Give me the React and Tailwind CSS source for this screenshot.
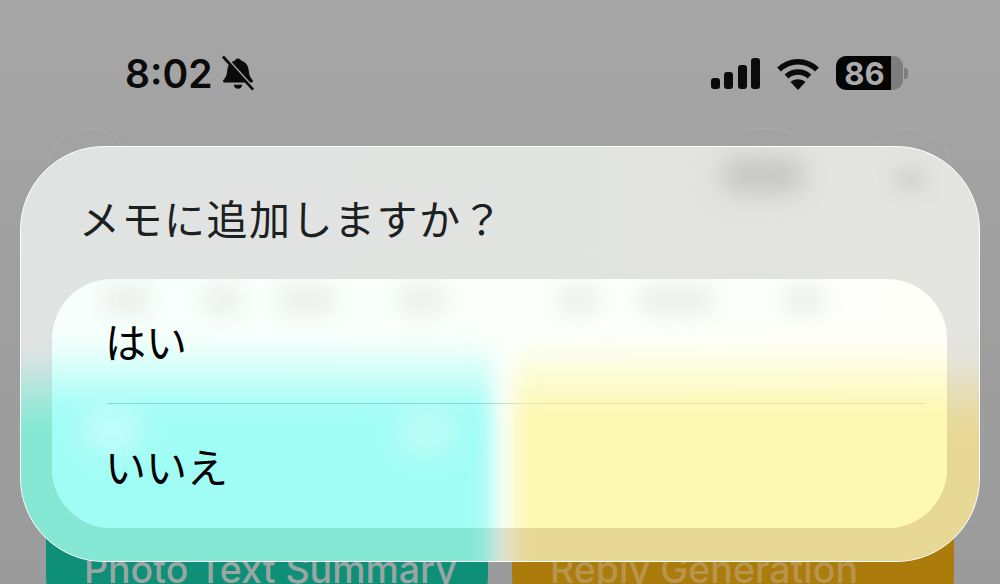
import React from 'react';

const jp = "font-['Noto_Sans_CJK_JP','Noto_Sans',sans-serif]";

// smudges of the blurred row behind the dialog's white panel
const smudges = [
  { id: 1, cls: 'left-[50px] w-[50px]' },
  { id: 2, cls: 'left-[150px] w-[40px]' },
  { id: 3, cls: 'left-[225px] w-[60px]' },
  { id: 4, cls: 'left-[345px] w-[50px]' },
  { id: 5, cls: 'left-[505px] w-[44px]' },
  { id: 6, cls: 'left-[585px] w-[80px]' },
  { id: 7, cls: 'left-[730px] w-[44px]' },
];

function BellOff() {
  return (
    <svg width="34" height="37" viewBox="0 0 36 38" fill="none">
      <path d="M18 3c2 0 3 1 3.400 2.600C26.500 7 29 11 29.500 16.500c.3 4 1.500 7 4 9.500.8 1 .4 2.500-1 2.500H3.500c-1.400 0-1.800-1.500-1-2.500 2.500-2.500 3.700-5.500 4-9.500C7 11 9.500 7 14.600 5.600 15 4 16 3 18 3z" fill="#0b0b0b" />
      <path d="M13.500 31h9c-.4 2.600-2.200 4.200-4.500 4.200s-4.100-1.600-4.500-4.200z" fill="#0b0b0b" />
      <path d="M4.500 2l30 33" stroke="#a3a3a3" strokeWidth="3.500" />
      <path d="M2 1l32 35" stroke="#0b0b0b" strokeWidth="2.800" />
    </svg>
  );
}

function Signal() {
  return (
    <div className="flex items-end gap-[4.5px] h-[31px]">
      <div className="w-[9px] h-[11px] rounded-[3px] bg-[#0b0b0b]" />
      <div className="w-[9px] h-[17px] rounded-[3px] bg-[#0b0b0b]" />
      <div className="w-[9px] h-[24px] rounded-[3px] bg-[#0b0b0b]" />
      <div className="w-[9px] h-[31px] rounded-[3px] bg-[#0b0b0b]" />
    </div>
  );
}

function Wifi() {
  return (
    <svg width="44" height="33" viewBox="0 0 44 33" fill="none">
      <path d="M3 12.500C14 2 30 2 41 12.500" stroke="#0b0b0b" strokeWidth="5.500" />
      <path d="M10.500 19.500c6.500-6 16.500-6 23 0" stroke="#0b0b0b" strokeWidth="5.500" />
      <path d="M22 33l-7.500-8c4-3.600 11-3.600 15 0L22 33z" fill="#0b0b0b" />
    </svg>
  );
}

function Battery() {
  return (
    <div className="flex items-center gap-[1px]">
      <div className="w-[67px] h-[34px] rounded-[10px] overflow-hidden flex bg-[#7d7d7d]">
        <div className="w-[55px] bg-[#050505] flex items-center justify-center pl-[2px] text-[#ababab] text-[31px] font-bold leading-none font-['Inter',sans-serif]">
          86
        </div>
      </div>
      <div className="w-[4px] h-[11px] rounded-r-[3px] bg-[#7d7d7d]" />
    </div>
  );
}

function Ghost({ className }) {
  return <div className={`h-[90px] rounded-full border border-white/10 ${className}`} />;
}

function Row({ label }) {
  return (
    <div className={`relative flex-1 flex items-center pl-[53px] text-[41px] text-black leading-none pb-[2px] ${jp}`}>
      {label}
    </div>
  );
}

export default function App() {
  return (
    <div className="relative w-[1000px] h-[584px] overflow-hidden bg-gradient-to-b from-[#a6a6a6] via-[#9f9f9f] to-[#9b9b9b] font-['Inter',sans-serif]">
      {/* page behind the dialog */}
      <div className="flex items-center justify-between h-[128px] pt-[18px] pl-[125px] pr-[92px]">
        <div className="flex items-center gap-[9px]">
          <span className="text-[39px] font-semibold leading-none text-[#0b0b0b]">8:02</span>
          <BellOff />
        </div>
        <div className="flex items-center gap-[16px]">
          <Signal />
          <Wifi />
          <Battery />
        </div>
      </div>
      <div className="flex justify-between pl-[47px] pr-[48px] h-[242px]">
        <Ghost className="w-[84px]" />
        <div className="flex gap-[51px]">
          <Ghost className="w-[103px]" />
          <Ghost className="w-[85px]" />
        </div>
      </div>
      <div className="flex gap-[24px] pl-[46px] pr-[46px]">
        <div className="w-[442px] h-[262px] rounded-[56px] bg-[#0e9078] flex items-end pl-[38px] pb-[44px]">
          <span className="text-[37.5px] leading-none font-medium text-[#9aa6a2] whitespace-nowrap">Photo Text Summary</span>
        </div>
        <div className="w-[442px] h-[262px] rounded-[56px] bg-[#ab7c0c] flex items-end pl-[38px] pb-[44px]">
          <span className="text-[37.5px] leading-none font-medium text-[#b8954c] whitespace-nowrap">Reply Generation</span>
        </div>
      </div>

      {/* dialog */}
      <div className="absolute left-[20px] top-[146px] w-[960px] h-[416px] rounded-[84px] overflow-hidden bg-gradient-to-r from-[#dfe3e2] to-[#e4e4e0] border-[1.5px] border-white flex flex-col px-[31px]">
        <div className="absolute left-[-30px] top-[205px] w-[500px] h-[260px] bg-gradient-to-b from-[#84e8d4]/0 to-[#84e8d4] to-[28%] blur-[10px]" />
        <div className="absolute left-[490px] top-[205px] w-[520px] h-[260px] bg-gradient-to-b from-[#e8d896]/0 to-[#e8d896] to-[28%] blur-[10px]" />
        <div className="absolute left-[700px] top-[10px] w-[84px] h-[36px] rounded-full bg-[#c6c6c3] blur-[12px]" />
        <div className="absolute left-[872px] top-[20px] w-[34px] h-[24px] rounded-full bg-[#d2d2cf] blur-[9px]" />

        <div className={`relative h-[132px] flex items-center pl-[27px] pt-[9px] text-[41px] leading-none text-[#1b2020] tracking-[1.5px] ${jp}`}>
          メモに追加しますか？
        </div>

        <div className="relative w-[895px] h-[249px] rounded-[60px] overflow-hidden bg-gradient-to-r from-[#f6fffc] via-[#fbfffb] to-[#fffffa] flex flex-col">
          {smudges.map((s) => (
            <div key={s.id} className={`absolute top-[4px] h-[34px] rounded-full bg-[#eef1ee] blur-[10px] ${s.cls}`} />
          ))}
          <div className="absolute left-[-30px] top-[60px] w-[470px] h-[240px] bg-gradient-to-b from-[#a0fdf5]/0 to-[#a0fdf5] to-[30%] blur-[10px]" />
          <div className="absolute left-[462px] top-[60px] w-[480px] h-[240px] bg-gradient-to-b from-[#fdf8b2]/0 to-[#fdf8b2] to-[30%] blur-[10px]" />
          <div className="absolute left-[30px] top-[125px] w-[60px] h-[50px] rounded-full bg-[#c4fdf9] blur-[14px]" />
          <div className="absolute left-[345px] top-[130px] w-[60px] h-[45px] rounded-full bg-[#bffdf6] blur-[14px]" />
          <Row label="はい" />
          <div className="relative ml-[55px] mr-[22px] h-[1px] bg-gradient-to-r from-[#80dcd0] from-45% via-[#d8e6b4] to-[#efe09c] to-55%" />
          <Row label="いいえ" />
        </div>
      </div>
    </div>
  );
}
